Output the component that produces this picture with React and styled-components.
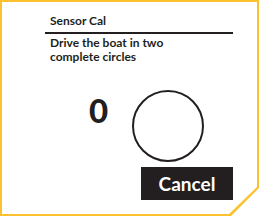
import React from 'react';
import styled, { createGlobalStyle } from 'styled-components';

const GlobalStyle = createGlobalStyle`
    html, body { margin: 0; padding: 0; background: #ffffff; }
    body { font-family: Lato, "Noto Sans", sans-serif; color: #231f20; }
`;

const Frame = styled.div`
    width: 259px; height: 216px;
    box-sizing: border-box;
    padding: 2px;
    background: #fcc12f;
    clip-path: polygon(0 0, 100% 0, 100% 188px, 231px 100%, 0 100%);
`;

const Sheet = styled.div`
    height: 100%;
    background: #ffffff;
    clip-path: polygon(0 0, 100% 0, 100% 185px, 227px 100%, 0 100%);
    padding: 12px 0 0 43px;
    box-sizing: border-box;
`;

const Column = styled.div`
    width: 188px;
    display: flex;
    flex-direction: column;
`;

const Title = styled.div`
    font-size: 12px;
    font-weight: 700;
    line-height: 14px;
    padding: 0 0 4px 5px;
    border-bottom: 2px solid #231f20;
`;

const Message = styled.div`
    font-size: 12px;
    font-weight: 700;
    line-height: 14px;
    padding: 2px 0 0 5px;
`;

const Progress = styled.div`
    display: flex;
    align-items: flex-start;
    gap: 24px;
    padding: 26px 0 0 44px;
`;

const Count = styled.div`
    font-size: 33px;
    font-weight: 900;
    line-height: 33px;
    margin-top: 4px;
    width: 19px;
`;

const Ring = styled.div`
    width: 72px; height: 72px;
    box-sizing: border-box;
    border: 2px solid #231f20;
    border-radius: 50%;
`;

const Actions = styled.div`
    display: flex;
    justify-content: flex-end;
    margin-top: 5px;
`;

const Button = styled.button`
    width: 92px; height: 33px;
    border: none;
    background: #231f20;
    color: #ffffff;
    font-family: Lato, "Noto Sans", sans-serif;
    font-size: 19px;
    font-weight: 700;
    padding: 0;
`;

export default () => (
    <>
        <GlobalStyle />
        <Frame>
            <Sheet>
                <Column>
                    <Title>Sensor Cal</Title>
                    <Message>Drive the boat in two<br />complete circles</Message>
                    <Progress>
                        <Count>0</Count>
                        <Ring />
                    </Progress>
                    <Actions>
                        <Button>Cancel</Button>
                    </Actions>
                </Column>
            </Sheet>
        </Frame>
    </>
);
